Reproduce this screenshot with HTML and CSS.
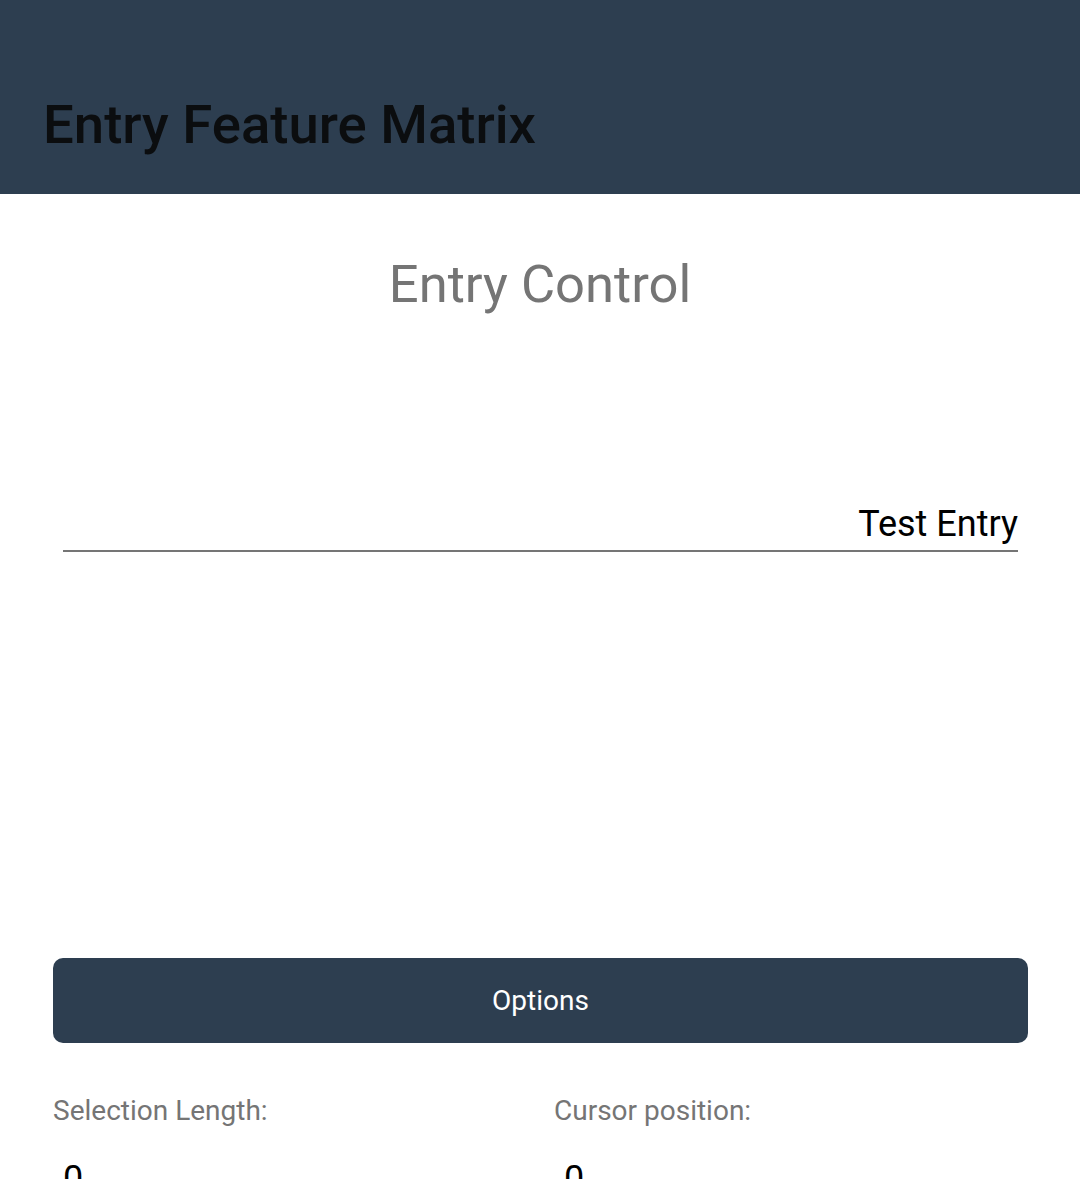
FILE: index.html
```html
<!DOCTYPE html>
<html>
<head>
<meta charset="utf-8">
<link rel="stylesheet" href="styles.css">
</head>
<body>
<header class="appbar">
  <h1 class="appbar-title">Entry Feature Matrix</h1>
</header>
<main class="content">
  <h2 class="page-title">Entry Control</h2>
  <div class="entry-area">
    <div class="entry">
      <span class="entry-text">Test Entry</span>
    </div>
  </div>
  <div class="button-row">
    <button class="options-btn">Options</button>
  </div>
  <div class="stats">
    <div class="stat">
      <div class="stat-label">Selection Length:</div>
      <div class="stat-value">0</div>
    </div>
    <div class="stat">
      <div class="stat-label">Cursor position:</div>
      <div class="stat-value">0</div>
    </div>
  </div>
</main>
</body>
</html>
```

FILE: styles.css
```css
html, body {
  margin: 0;
  padding: 0;
  background: #ffffff;
  font-family: Roboto, "Liberation Sans", sans-serif;
  overflow: hidden;
}

.appbar {
  background: #2d3e50;
  height: 194px;
  display: flex;
  align-items: flex-end;
  padding: 0 43px;
  box-sizing: border-box;
}

.appbar-title {
  margin: 0 0 40px 0;
  font-size: 54.5px;
  font-weight: 500;
  color: #0b0d0f;
  line-height: 60px;
}

.content {
  display: flex;
  flex-direction: column;
}

.page-title {
  margin: 58px 0 0 0;
  text-align: center;
  font-size: 52.5px;
  font-weight: 400;
  color: #757575;
  line-height: 64px;
}

.entry-area {
  padding: 0 62px 0 63px;
  margin-top: 188px;
}

.entry {
  display: flex;
  justify-content: flex-end;
  border-bottom: 2px solid #757575;
  height: 48px;
  align-items: flex-end;
  padding-bottom: 6px;
  box-sizing: border-box;
}

.entry-text {
  font-size: 36px;
  color: #000000;
  line-height: 40px;
}

.button-row {
  padding: 0 52px 0 53px;
  margin-top: 406px;
}

.options-btn {
  width: 100%;
  height: 85px;
  background: #2d3e50;
  border: none;
  border-radius: 10px;
  color: #ffffff;
  font-family: Roboto, "Liberation Sans", sans-serif;
  font-size: 28px;
  padding: 0;
}

.stats {
  display: grid;
  grid-template-columns: 501px 1fr;
  padding: 0 52px 0 53px;
  margin-top: 50px;
}

.stat-label {
  font-size: 28px;
  color: #757575;
  line-height: 36px;
}

.stat-value {
  margin-top: 30px;
  padding-left: 10px;
  font-size: 36px;
  color: #000000;
  line-height: 40px;
}
```
